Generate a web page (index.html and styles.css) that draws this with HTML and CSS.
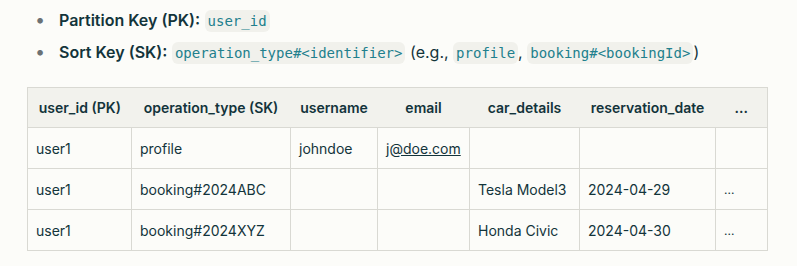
FILE: index.html
```html
<!DOCTYPE html>
<html>
<head>
<meta charset="utf-8">
<link rel="stylesheet" href="styles.css">
</head>
<body>
<ul class="keys">
  <li><strong>Partition Key (PK):</strong> <code>user_id</code></li>
  <li><strong>Sort Key (SK):</strong> <code>operation_type#&lt;identifier&gt;</code> (e.g., <code>profile</code>, <code>booking#&lt;bookingId&gt;</code>)</li>
</ul>
<table class="data">
  <colgroup>
    <col class="c1"><col class="c2"><col class="c3"><col class="c4"><col class="c5"><col class="c6"><col class="c7">
  </colgroup>
  <thead>
    <tr>
      <th>user_id (PK)</th>
      <th>operation_type (SK)</th>
      <th>username</th>
      <th>email</th>
      <th>car_details</th>
      <th>reservation_date</th>
      <th>...</th>
    </tr>
  </thead>
  <tbody>
    <tr>
      <td>user1</td>
      <td>profile</td>
      <td>johndoe</td>
      <td><a href="#">j@doe.com</a></td>
      <td></td>
      <td></td>
      <td></td>
    </tr>
    <tr>
      <td>user1</td>
      <td>booking#2024ABC</td>
      <td></td>
      <td></td>
      <td>Tesla Model3</td>
      <td>2024-04-29</td>
      <td class="more">...</td>
    </tr>
    <tr>
      <td>user1</td>
      <td>booking#2024XYZ</td>
      <td></td>
      <td></td>
      <td>Honda Civic</td>
      <td>2024-04-30</td>
      <td class="more">...</td>
    </tr>
  </tbody>
</table>
</body>
</html>
```

FILE: styles.css
```css
html, body {
  margin: 0;
  padding: 0;
  background: #fcfcf9;
}
body {
  font-family: Inter, "Noto Sans", sans-serif;
  color: #13343b;
  font-size: 16px;
}
.keys {
  margin: 0;
  padding: 4px 0 0 59px;
  list-style: none;
}
.keys li {
  line-height: 32px;
  height: 32px;
}
.keys li::before {
  content: "•";
  display: inline-block;
  width: 24px;
  margin-left: -24px;
  color: #6b7275;
  font-size: 18px;
}
.keys strong {
  font-weight: 600;
}
.keys code {
  font-family: "DejaVu Sans Mono", monospace;
  font-size: 14px;
  color: #21808d;
  background: #f1f1ec;
  border-radius: 6px;
  padding: 3px 3px;
}
.data {
  margin: 19px 0 0 27px;
  border-collapse: collapse;
  table-layout: fixed;
  width: 740px;
  font-size: 14px;
}
.c1 { width: 104px; }
.c2 { width: 159px; }
.c3 { width: 87px; }
.c4 { width: 92px; }
.c5 { width: 110px; }
.c6 { width: 136px; }
.c7 { width: 52px; }
.data th {
  background: #f2f2ed;
  font-weight: 600;
  text-align: center;
  height: 39px;
  padding: 0 4px;
  border-top: 1px solid #d9d9d3;
  border-bottom: 1px solid #d9d9d3;
  white-space: nowrap;
}
.data th:first-child { border-left: 1px solid #d9d9d3; }
.data th:last-child { border-right: 1px solid #d9d9d3; }
.data td {
  border: 1px solid #d9d9d3;
  height: 40px;
  padding: 0 8px;
  white-space: nowrap;
}
.data td.more {
  font-size: 12px;
}
.data a {
  color: #13343b;
  text-decoration: underline;
}
```
